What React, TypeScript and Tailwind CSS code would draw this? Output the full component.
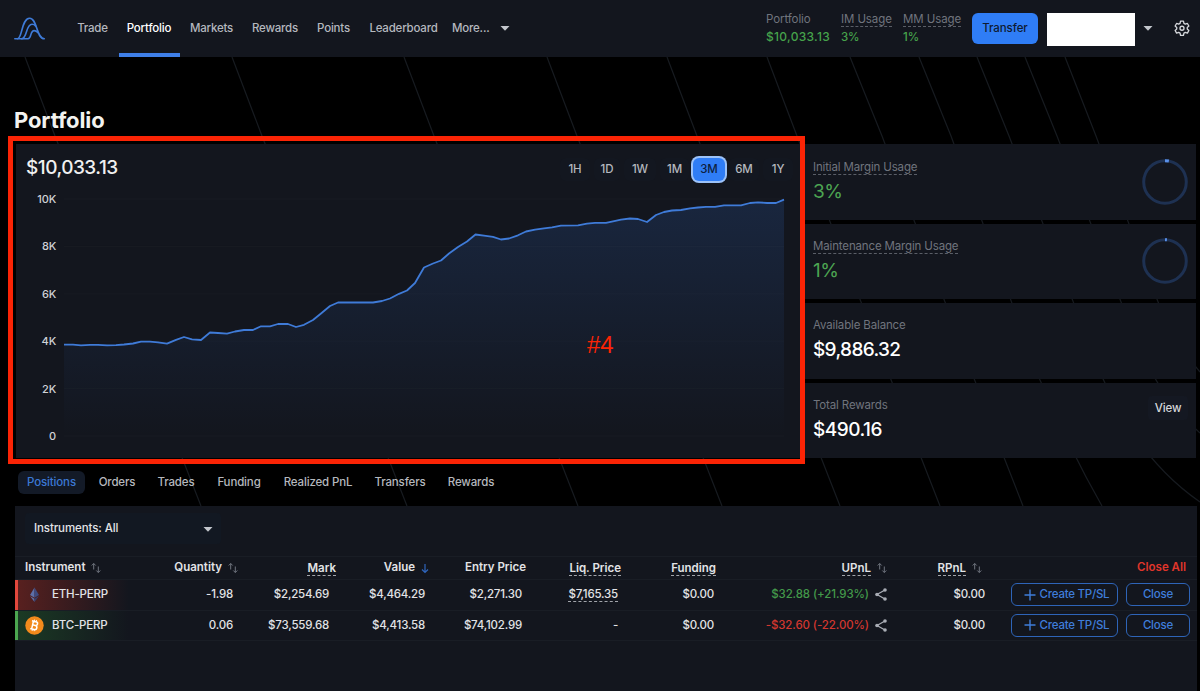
import clsx from "clsx";
import { useState } from "react";

const navLinks = [
  { label: "Trade", width: "w-[45px]" },
  { label: "Portfolio", width: "w-[61px]" },
  { label: "Markets", width: "w-[57px]" },
  { label: "Rewards", width: "w-[63px]" },
  { label: "Points", width: "w-[47px]" },
  { label: "Leaderboard", width: "w-[86px]" },
];

const ranges = [
  { label: "1H", width: "w-[30px]" },
  { label: "1D", width: "w-[26px]" },
  { label: "1W", width: "w-[32px]" },
  { label: "1M", width: "w-[29px]" },
  { label: "3M", width: "w-[32px]" },
  { label: "6M", width: "w-[30px]" },
  { label: "1Y", width: "w-[30px]" },
];

const tabs = [
  { label: "Positions", width: "w-[67px]" },
  { label: "Orders", width: "w-[56px]" },
  { label: "Trades", width: "w-[54px]" },
  { label: "Funding", width: "w-[64px]" },
  { label: "Realized PnL", width: "w-[86px]" },
  { label: "Transfers", width: "w-[70px]" },
  { label: "Rewards", width: "w-[64px]" },
];

// x / y pairs inside the 784x314 chart card
const points: [number, number][] = [
  [48, 200.7], [57, 200.7], [65, 201.3], [74, 200.8], [82, 200.8], [91, 201.3],
  [100, 201.2], [108, 200.5], [117, 199.5], [125, 197.7], [134, 197.7],
  [142, 198.3], [151, 199.7], [160, 195.8], [168, 193], [176, 195.3],
  [185, 196], [194, 188.5], [202, 189], [211, 189.7], [219, 187.5], [228, 186],
  [237, 186], [245, 182.3], [254, 182.3], [262, 180], [272, 180], [280, 183],
  [288, 180.8], [297, 176], [305, 169.5], [314, 162], [322, 158.5],
  [357, 158.5], [366, 157], [374, 154.5], [383, 149.8], [391, 146.5],
  [399, 139], [408, 123.5], [417, 119.5], [425, 116.5], [433, 109.5],
  [442, 103], [451, 97.5], [459.5, 90.5], [468, 91.7], [477, 92.8],
  [485, 95.5], [493, 94.5], [502, 91.3], [510, 87.5], [519, 85.7],
  [528, 84.3], [536, 83.3], [545, 81.7], [562, 81.3], [571, 79.7],
  [579, 78.8], [590, 78.8], [597, 77.3], [605, 75.7], [614, 74.5],
  [622, 75], [631, 78], [640, 71], [648, 68], [656, 66.5], [665, 66],
  [674, 64.3], [682, 63.5], [690, 62.8], [699, 62.8], [708, 61.3],
  [725, 61.3], [734, 59], [742, 58.3], [751, 59], [760, 59], [768, 55.7],
];

const yTicks = [
  { label: "10K", y: 55 },
  { label: "8K", y: 102.4 },
  { label: "6K", y: 149.8 },
  { label: "4K", y: 197.2 },
  { label: "2K", y: 244.6 },
  { label: "0", y: 292 },
];

const positions = [
  {
    name: "ETH-PERP",
    icon: "eth",
    quantity: "-1.98",
    mark: "$2,254.69",
    value: "$4,464.29",
    entry: "$2,271.30",
    liq: "$7,165.35",
    funding: "$0.00",
    upnl: "$32.88 (+21.93%)",
    profit: true,
    rpnl: "$0.00",
  },
  {
    name: "BTC-PERP",
    icon: "btc",
    quantity: "0.06",
    mark: "$73,559.68",
    value: "$4,413.58",
    entry: "$74,102.99",
    liq: "-",
    funding: "$0.00",
    upnl: "-$32.60 (-22.00%)",
    profit: false,
    rpnl: "$0.00",
  },
];

const tableGrid =
  "grid grid-cols-[126px_97px_98px_93px_97px_95px_95px_171px_99px_204px] items-center";

function Caret() {
  return (
    <svg width="10" height="5" viewBox="0 0 10 5" className="shrink-0">
      <path d="M0.5 0h9L5 4.8z" fill="#c3c6cc" />
    </svg>
  );
}

function Logo() {
  return (
    <svg
      width="32"
      height="24"
      viewBox="0 0 32 24"
      fill="none"
      stroke="#3f7bd8"
      strokeWidth="1.6"
      strokeLinecap="round"
    >
      <path d="M0.8 21.8H3.5C8.2 21.8 7.6 1.2 15.6 1.2C23.6 1.2 22 21.8 30.3 21.8" />
      <path d="M3.5 21.8H7.5C13.5 21.8 11.5 7.3 18 7.3C19.5 7.3 20.8 7.8 21.6 9" />
      <path d="M7.5 21.8H14C17.8 21.8 15.8 13.6 20.2 13.6C21.8 13.6 22.8 14.3 23.8 15.6" />
    </svg>
  );
}

function Gear() {
  return (
    <svg
      width="16"
      height="16"
      viewBox="0 0 24 24"
      fill="none"
      stroke="#d5d7db"
      strokeWidth="2"
      strokeLinejoin="round"
    >
      <path d="M9.8 1.8h4.4l.7 3.2 2.1 1.2 3.1-1 2.2 3.8-2.4 2.2v2.4l2.4 2.2-2.2 3.8-3.1-1-2.1 1.2-.7 3.2H9.8L9.1 19.8 7 18.6l-3.1 1-2.2-3.8 2.4-2.2v-2.4L1.7 9l2.2-3.8 3.1 1L9.1 5z" />
      <circle cx="12" cy="12.4" r="3" />
    </svg>
  );
}

function SortIcon() {
  return (
    <svg
      width="10"
      height="12"
      viewBox="0 0 10 12"
      fill="none"
      stroke="#70757f"
      strokeWidth="1"
      className="shrink-0"
    >
      <path d="M2.7 7.5V1.5M0.7 3.5l2-2 2 2M7.3 4.5v6M5.3 8.5l2 2 2-2" />
    </svg>
  );
}

function ShareIcon() {
  return (
    <svg width="12" height="13" viewBox="0 0 12 13" className="shrink-0">
      <path d="M10 2L2 6.5L10 11" fill="none" stroke="#a9adb5" strokeWidth="1.3" />
      <circle cx="10" cy="2" r="1.8" fill="#a9adb5" />
      <circle cx="2" cy="6.5" r="1.8" fill="#a9adb5" />
      <circle cx="10" cy="11" r="1.8" fill="#a9adb5" />
    </svg>
  );
}

function CoinIcon({ icon }: { icon: string }) {
  if (icon === "eth") {
    return (
      <svg width="19" height="19" viewBox="0 0 19 19">
        <path d="M9.5 2.5L5 10l4.5 2.7z" fill="#5d6fa8" />
        <path d="M9.5 2.5L14 10l-4.5 2.7z" fill="#3d4a80" />
        <path d="M5 11l4.5 2.7V17z" fill="#5d6fa8" />
        <path d="M14 11l-4.5 2.7V17z" fill="#34406f" />
      </svg>
    );
  }
  return (
    <svg width="19" height="19" viewBox="0 0 19 19" fill="none">
      <circle cx="9.5" cy="9.5" r="9.2" fill="#f28a1c" />
      <g transform="rotate(13 9.5 9.5)" stroke="#fff" strokeWidth="1.5">
        <path d="M7.5 5.5v8M6 5.5h4.2a1.9 1.9 0 0 1 0 3.8H7.5M10.2 9.3a2.1 2.1 0 0 1 0 4.2H6" />
        <path d="M8.3 3.8v1.7M10.3 3.8v1.7M8.3 13.5v1.7M10.3 13.5v1.7" strokeWidth="1" />
      </g>
    </svg>
  );
}

function Ring({ percent }: { percent: number }) {
  return (
    <svg width="46" height="46" viewBox="0 0 46 46" fill="none" strokeWidth="3">
      <circle cx="23" cy="23" r="21.3" stroke="#1e3152" />
      <circle
        cx="23"
        cy="23"
        r="21.3"
        stroke="#5a90e8"
        pathLength="100"
        strokeDasharray={`${percent} 100`}
        transform="rotate(-90 23 23)"
      />
    </svg>
  );
}

function BackgroundLines() {
  return (
    <svg
      width="1200"
      height="691"
      className="absolute inset-0"
      fill="none"
      stroke="#171b20"
      strokeWidth="1.2"
    >
      <path d="M25 57L55 136L183 460L201 506" />
      <path d="M232 57L262 136L389 460L407 506" />
      <path d="M404 57L434 136L560 460L578 506" />
      <path d="M547 57L577 136L704 460L722 506" />
      <path d="M667 57L697 136L822 460L840 506" />
      <path d="M767 57L797 136L922 460L940 506" />
      <path d="M850 57L882 136L1005 460L1023 506" />
      <path d="M919 57L951 136L1040 380Q1070 450 1102 506" />
      <path d="M977 57L1009 136L1088 340Q1125 450 1200 502" />
      <path d="M1025 57L1057 136L1128 320Q1152 390 1200 433" />
      <path d="M1065 57L1096 136L1150 280Q1168 335 1200 372" />
    </svg>
  );
}

function Header() {
  return (
    <header className="relative flex h-[57px] items-center bg-[#13161e] pl-3.5 pr-2.5">
      <Logo />
      <nav className="ml-6 flex h-full items-center text-[11.5px] font-medium tracking-[-0.2px] text-[#b5b8be]">
        {navLinks.map((link) => (
          <a
            key={link.label}
            href="#"
            className={clsx(
              "mr-[3.5px] flex h-full items-center justify-center border-y-4 border-transparent pt-px",
              link.width,
              link.label === "Portfolio" && "border-b-[#3f7fe8] text-white",
            )}
          >
            {link.label}
          </a>
        ))}
        <button type="button" className="ml-0.5 flex items-center gap-2.5">
          More...
          <Caret />
        </button>
      </nav>

      <div className="ml-auto flex items-center text-[11.5px] leading-[17px] tracking-[-0.1px]">
        <div className="w-[75px] pb-px">
          <p className="text-[#70747d]">Portfolio</p>
          <p className="text-[12px] font-medium tracking-[0.3px] text-[#46a24b]">
            $10,033.13
          </p>
        </div>
        <div className="w-[62px]">
          <p className="flex text-[#70747d]">
            <span className="border-b border-dashed border-[#5a5e67] leading-[14px]">
              IM Usage
            </span>
          </p>
          <p className="mt-0.5 font-medium text-[#46a24b]">3%</p>
        </div>
        <div className="w-[69px]">
          <p className="flex text-[#70747d]">
            <span className="border-b border-dashed border-[#5a5e67] leading-[14px]">
              MM Usage
            </span>
          </p>
          <p className="mt-0.5 font-medium text-[#46a24b]">1%</p>
        </div>
        <button
          type="button"
          className="h-[31px] w-[66px] rounded-md bg-[#2f7df6] font-medium text-[#0e1a30]"
        >
          Transfer
        </button>
        <div className="ml-[9px] mr-2 mt-px h-[33px] w-[88px] bg-white" />
        <Caret />
        <button type="button" className="mb-0.5 ml-[21px]">
          <Gear />
        </button>
      </div>
    </header>
  );
}

function ChartCard() {
  const [range, setRange] = useState<string>("3M");
  const line = points.map(([x, y]) => `${x},${y}`).join(" ");

  return (
    <section className="relative h-[314px] w-[784px] bg-[#13161e]">
      <svg width="784" height="314" className="absolute inset-0">
        <defs>
          <linearGradient id="area" x1="0" y1="0" x2="0" y2="1">
            <stop offset="0" stopColor="#3b82f6" stopOpacity="0.15" />
            <stop offset="1" stopColor="#3b82f6" stopOpacity="0" />
          </linearGradient>
        </defs>
        {yTicks.map((tick) => (
          <g key={tick.label}>
            <line x1="48" x2="768" y1={tick.y} y2={tick.y} stroke="#181b22" />
            <text
              x="40"
              y={tick.y + 4}
              textAnchor="end"
              fontSize="11"
              fontWeight="500"
              letterSpacing="-0.2"
              fill="#d0d2d6"
            >
              {tick.label}
            </text>
          </g>
        ))}
        <polygon points={`48,292 ${line} 768,292`} fill="url(#area)" />
        <polyline
          points={line}
          fill="none"
          stroke="#3f7bd8"
          strokeWidth="1.8"
          strokeLinejoin="round"
        />
      </svg>

      <div className="relative flex justify-between pl-2.5 pr-[7px] pt-2.5">
        <h2 className="text-[19px] leading-7 font-medium tracking-[-0.5px] text-[#f0f0f0]">
          $10,033.13
        </h2>
        <div className="flex items-center gap-1 pt-0.5 text-[11.5px] font-medium tracking-[-0.1px] text-[#b5b8be]">
          {ranges.map((item) => (
            <button
              key={item.label}
              type="button"
              onClick={() => setRange(item.label)}
              className={clsx(
                "h-[23px] rounded-md pt-px",
                item.width,
                range === item.label
                  ? "bg-[#2f7df6] text-[#0e1f40] ring-2 ring-[#9cc2f8]"
                  : "bg-[#131720]",
              )}
            >
              {item.label}
            </button>
          ))}
        </div>
      </div>

      {/* callout drawn over the card */}
      <div className="pointer-events-none absolute -left-2 -top-2 h-[328px] w-[797px] border-[5px] border-[#fb2405]" />
      <span className="absolute left-[571px] top-[187px] font-['Liberation_Sans',sans-serif] text-[24px] leading-7 text-[#fb2405]">
        #4
      </span>
    </section>
  );
}

function StatCards() {
  return (
    <aside className="ml-1 grid h-[314px] w-[392px] grid-rows-4 gap-1 text-[11.5px] tracking-[-0.15px]">
      {[
        { label: "Initial Margin Usage", value: "3%", percent: 3 },
        { label: "Maintenance Margin Usage", value: "1%", percent: 1.5 },
      ].map((card) => (
        <div
          key={card.label}
          className="flex items-center justify-between bg-[#13161e] pl-[9px] pr-2"
        >
          <div className="pt-0.5">
            <p className="flex text-[#70747d]">
              <span className="border-b border-dashed border-[#5a5e67] leading-[14px]">
                {card.label}
              </span>
            </p>
            <p className="mt-[3px] text-[19px] leading-7 tracking-[-0.6px] text-[#4da552]">
              {card.value}
            </p>
          </div>
          <Ring percent={card.percent} />
        </div>
      ))}
      <div className="flex flex-col justify-center bg-[#13161e] pl-[9px]">
        <p className="leading-4 text-[#70747d]">Available Balance</p>
        <p className="mt-[3px] text-[19px] leading-7 font-medium tracking-[-0.65px] text-white">
          $9,886.32
        </p>
      </div>
      <div className="flex items-center justify-between bg-[#13161e] pl-[9px] pr-2">
        <div>
          <p className="leading-4 text-[#70747d]">Total Rewards</p>
          <p className="mt-[3px] text-[19px] leading-7 font-medium tracking-[-0.5px] text-white">
            $490.16
          </p>
        </div>
        <button
          type="button"
          className="mb-6 h-6 w-10 rounded bg-[#141822] pt-px font-medium text-[#d5d7db]"
        >
          View
        </button>
      </div>
    </aside>
  );
}

function Tabs() {
  return (
    <div className="flex h-[23px] gap-1 pl-[18px] text-[11.5px] font-medium tracking-[-0.15px] text-[#b5b8be]">
      {tabs.map((tab) => (
        <button
          key={tab.label}
          type="button"
          className={clsx(
            "rounded-md pt-px",
            tab.width,
            tab.label === "Positions" && "bg-[#131a27] text-[#3b78d4]",
          )}
        >
          {tab.label}
        </button>
      ))}
    </div>
  );
}

function Underlined({ children }: { children: string }) {
  return (
    <span className="border-b border-dashed border-[#a2a5ab] leading-[14px]">
      {children}
    </span>
  );
}

function PositionsTable() {
  return (
    <section className="ml-[15px] h-[185px] w-[1182px] bg-[#13161e] text-[11.5px] text-[#e2e3e6]">
      <div className="flex h-[50px] pl-2.5 pt-[7px]">
        <button
          type="button"
          className="flex h-[31px] w-[196px] items-center justify-between rounded bg-[#121822] pl-[9px] pr-2 pt-px font-medium tracking-[-0.1px]"
        >
          Instruments: All
          <Caret />
        </button>
      </div>

      <div
        className={clsx(
          tableGrid,
          "h-6 border-y border-[#191d25] font-semibold [&>div]:flex [&>div]:items-center [&>div]:justify-end [&>div]:gap-1.5",
        )}
      >
        <div className="!justify-start pl-2.5">
          Instrument <SortIcon />
        </div>
        <div>
          Quantity <SortIcon />
        </div>
        <div>
          <Underlined>Mark</Underlined>
        </div>
        <div>
          Value
          <svg width="8" height="11" viewBox="0 0 8 11" fill="none" stroke="#2f66bd" strokeWidth="1.2">
            <path d="M4 1v8.5M1 6.5l3 3 3-3" />
          </svg>
        </div>
        <div>Entry Price</div>
        <div>
          <Underlined>Liq. Price</Underlined>
        </div>
        <div>
          <Underlined>Funding</Underlined>
        </div>
        <div>
          <Underlined>UPnL</Underlined> <SortIcon />
        </div>
        <div className="pr-1">
          <Underlined>RPnL</Underlined> <SortIcon />
        </div>
        <div className="pr-1 text-[#e0352b]">Close All</div>
      </div>

      {positions.map((row) => (
        <div
          key={row.name}
          className={clsx(
            tableGrid,
            "h-[30.5px] border-b border-[#191d25] text-right font-medium tracking-[-0.2px]",
          )}
        >
          <div
            className={clsx(
              "flex h-full items-center gap-2 border-l-[3px] bg-linear-to-r to-transparent to-90% pl-[7px]",
              row.quantity.startsWith("-")
                ? "border-[#e2483d] from-[#58201f]"
                : "border-[#4ca650] from-[#1b3a24]",
            )}
          >
            <CoinIcon icon={row.icon} />
            {row.name}
          </div>
          <div className="pr-[5px]">{row.quantity}</div>
          <div className="pr-[7px]">{row.mark}</div>
          <div className="pr-1">{row.value}</div>
          <div className="pr-1">{row.entry}</div>
          <div className="pr-[3px]">
            {row.liq === "-" ? row.liq : <Underlined>{row.liq}</Underlined>}
          </div>
          <div className="pr-0.5">{row.funding}</div>
          <div
            className={clsx(
              "flex items-center justify-end gap-1.5 tracking-[-0.1px]",
              row.profit ? "text-[#43994a]" : "text-[#d2362f]",
            )}
          >
            {row.upnl}
            <ShareIcon />
          </div>
          <div className="pr-px">{row.rpnl}</div>
          <div className="flex justify-end gap-2 text-[#3f7dda]">
            <button
              type="button"
              className="flex h-[23px] w-[107px] items-center justify-center gap-1 rounded-md border border-[#2e64b8] pl-1 tracking-[-0.25px]"
            >
              <svg width="12" height="12" viewBox="0 0 12 12" stroke="currentColor" strokeWidth="1.4">
                <path d="M6 0.5v11M0.5 6h11" />
              </svg>
              Create TP/SL
            </button>
            <button
              type="button"
              className="h-[23px] w-[64px] rounded-md border border-[#2e64b8]"
            >
              Close
            </button>
          </div>
        </div>
      ))}
    </section>
  );
}

export default function App() {
  return (
    <div className="relative h-[691px] w-[1200px] overflow-hidden bg-black font-['Inter',sans-serif]">
      <BackgroundLines />
      <Header />
      <main className="relative">
        <h1 className="flex h-[87px] items-end pb-2.5 pl-3.5 text-[22px] leading-7 font-bold tracking-[-0.1px] text-[#f3f3f0]">
          Portfolio
        </h1>
        <div className="flex pl-4">
          <ChartCard />
          <StatCards />
        </div>
        <div className="pb-3 pt-[13px]">
          <Tabs />
        </div>
        <PositionsTable />
      </main>
    </div>
  );
}
